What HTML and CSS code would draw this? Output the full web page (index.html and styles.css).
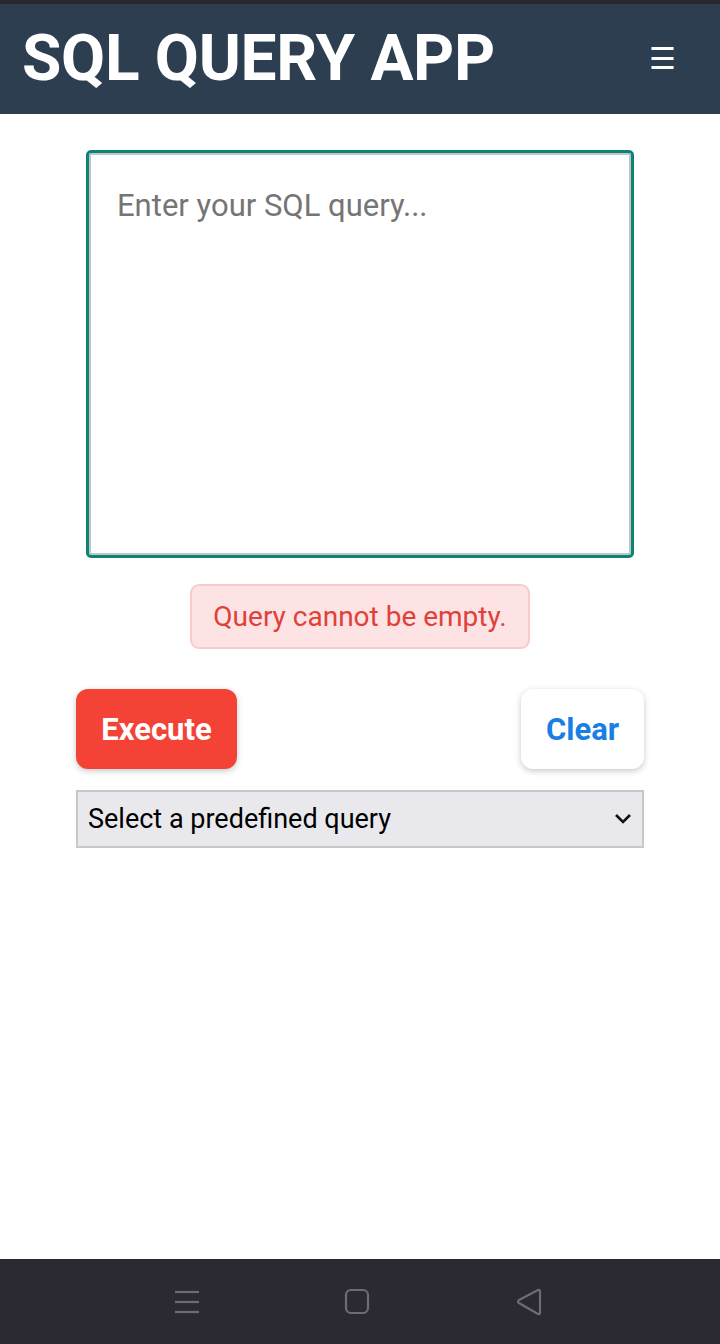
FILE: index.html
```html
<!DOCTYPE html>
<html>
<head>
<meta charset="utf-8">
<link rel="stylesheet" href="styles.css">
</head>
<body>
<div class="screen">
  <div class="status"></div>
  <header class="appbar">
    <h1 class="title">SQL QUERY APP</h1>
    <span class="menu">☰</span>
  </header>
  <main class="content">
    <textarea class="query" placeholder="Enter your SQL query..."></textarea>
    <div class="error">Query cannot be empty.</div>
    <div class="actions">
      <button class="btn execute">Execute</button>
      <button class="btn clear">Clear</button>
    </div>
    <div class="select">
      <span>Select a predefined query</span>
      <svg class="chev" width="18" height="12" viewBox="0 0 18 12"><path d="M2 2 L9 9 L16 2" fill="none" stroke="#111" stroke-width="2.6"/></svg>
    </div>
  </main>
  <nav class="navbar">
    <svg width="26" height="26" viewBox="0 0 26 26"><g stroke="#6d6c74" stroke-width="2.2"><line x1="1" y1="3" x2="25" y2="3"/><line x1="1" y1="13" x2="25" y2="13"/><line x1="1" y1="23" x2="25" y2="23"/></g></svg>
    <svg width="26" height="28" viewBox="0 0 26 28"><rect x="2" y="2" width="22" height="23" rx="5" fill="none" stroke="#6d6c74" stroke-width="2.2"/></svg>
    <svg width="28" height="30" viewBox="0 0 28 30"><path d="M24 3 Q26 2 26 5 L26 25 Q26 28 24 27 L5 16 Q3 15 5 13 Z" fill="none" stroke="#6d6c74" stroke-width="2.2" stroke-linejoin="round"/></svg>
  </nav>
</div>
</body>
</html>
```

FILE: styles.css
```css
* { box-sizing: border-box; }
html, body { margin: 0; padding: 0; }
body { font-family: Roboto, "Noto Sans", sans-serif; background: #fff; }
.screen { width: 720px; height: 1344px; display: flex; flex-direction: column; }
.status { height: 4px; background: #28282e; }
.appbar {
  height: 110px; background: #2c3e50; display: flex; align-items: center;
  justify-content: space-between; padding: 0 44px 0 22px;
}
.title { margin: 0; color: #fff; font-size: 64px; font-weight: 700; line-height: 1; letter-spacing: -0.3px; }
.menu { color: #fff; font-size: 30px; line-height: 1; }
.content { display: flex; flex-direction: column; align-items: center; padding-top: 39px; }
.query {
  width: 542px; height: 402px; border: 2px solid #c4c4c4; outline: 3px solid #0e8474;
  border-radius: 2px; padding: 32px 26px; font-family: Roboto, sans-serif; font-size: 31px;
  resize: none; background: #fff; display: block;
}
.query::placeholder { color: #757575; }
.error {
  margin-top: 29px; background: #fde3e3; border: 2px solid #f9cbcb; border-radius: 9px;
  color: #e0403a; font-size: 28px; padding: 0 21px; height: 65px; display: flex; align-items: center;
}
.actions { width: 568px; display: flex; justify-content: space-between; margin-top: 40px; }
.btn {
  height: 80px; border: none; border-radius: 12px; font-family: Roboto, sans-serif;
  font-size: 31px; font-weight: 700; padding: 0; box-shadow: 0 2px 6px rgba(0,0,0,0.22);
}
.execute { background: #f44336; color: #fff; width: 161px; }
.clear { background: #fff; color: #1a7fe5; width: 123px; }
.select {
  width: 568px; height: 58px; margin-top: 21px; background: #e9e9ed; border: 2px solid #c8c8c8;
  display: flex; align-items: center; justify-content: space-between; padding: 0 10px 0 10px;
  font-size: 27px; color: #000;
}
.navbar {
  margin-top: auto; height: 85px; background: #2b2a32; display: flex; align-items: center;
  justify-content: center; gap: 144px; padding-right: 4px;
}
```
